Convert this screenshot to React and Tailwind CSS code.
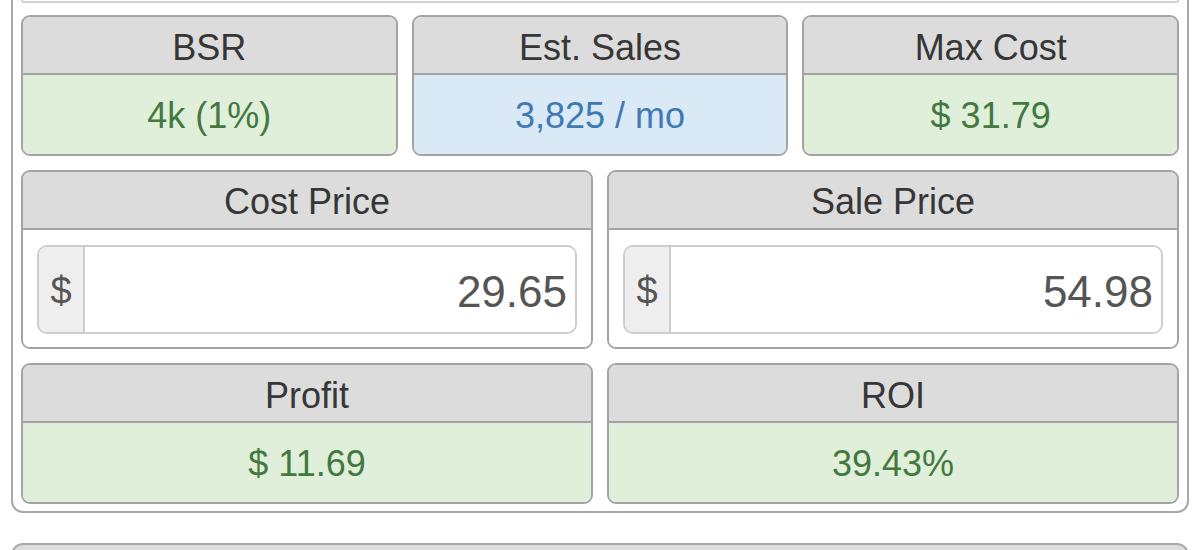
import React from 'react';

const font = { fontFamily: '"Liberation Sans", Arial, sans-serif' };

function StatTile({ label, value, tone = 'green' }) {
  const toneCls =
    tone === 'blue' ? 'bg-[#d9eaf6] text-[#4179b5]' : 'bg-[#dfefd9] text-[#43783f]';
  return (
    <div className="h-[141px] flex flex-col border-2 border-[#a3a3a3] rounded-[9px] overflow-hidden">
      <div className="h-[58px] shrink-0 bg-[#dcdcdc] border-b-2 border-[#a3a3a3] flex items-center justify-center text-[36px] text-[#363636] leading-none pt-[5px]">
        {label}
      </div>
      <div className={`flex-1 flex items-center justify-center text-[36px] leading-none pt-[2px] ${toneCls}`}>
        {value}
      </div>
    </div>
  );
}

function PriceTile({ label, value }) {
  return (
    <div className="h-[179px] flex flex-col border-2 border-[#a3a3a3] rounded-[9px] overflow-hidden">
      <div className="h-[58px] shrink-0 bg-[#dcdcdc] border-b-2 border-[#a3a3a3] flex items-center justify-center text-[36px] text-[#363636] leading-none pt-[4px]">
        {label}
      </div>
      <div className="flex-1 bg-white px-[14px] flex items-center pt-[2px]">
        <div className="w-full h-[89px] border-2 border-[#cdcdcd] rounded-[10px] overflow-hidden flex">
          <div className="w-[46px] bg-[#eeeeee] border-r-2 border-[#cdcdcd] flex items-center justify-center text-[38px] text-[#555555] leading-none pt-[2px]">
            $
          </div>
          <input
            readOnly
            defaultValue={value}
            className="flex-1 min-w-0 bg-white text-right pr-[8px] pt-[4px] text-[44px] text-[#555555] outline-none"
            style={font}
          />
        </div>
      </div>
    </div>
  );
}

export default function App() {
  return (
    <div className="w-[1200px] h-[550px] overflow-hidden bg-white" style={font}>
      <div className="mx-[11px] border-2 border-t-0 border-[#a9a9a9] rounded-b-[12px] px-[8px] pb-[7px]">
        <div className="h-[3px] border-2 border-t-0 border-[#d0d0d0] rounded-b-[8px]" />
        <div className="mt-[12px] flex flex-col gap-[14px]">
          <div className="grid grid-cols-3 gap-[14px]">
            <StatTile label="BSR" value="4k (1%)" />
            <StatTile label="Est. Sales" value="3,825 / mo" tone="blue" />
            <StatTile label="Max Cost" value="$ 31.79" />
          </div>
          <div className="grid grid-cols-2 gap-[14px]">
            <PriceTile label="Cost Price" value="29.65" />
            <PriceTile label="Sale Price" value="54.98" />
          </div>
          <div className="grid grid-cols-2 gap-[14px]">
            <StatTile label="Profit" value="$ 11.69" />
            <StatTile label="ROI" value="39.43%" />
          </div>
        </div>
      </div>
      <div className="mt-[30px] mx-[11px] h-[40px] border-2 border-[#a9a9a9] rounded-t-[12px] bg-[#dcdcdc]" />
    </div>
  );
}
